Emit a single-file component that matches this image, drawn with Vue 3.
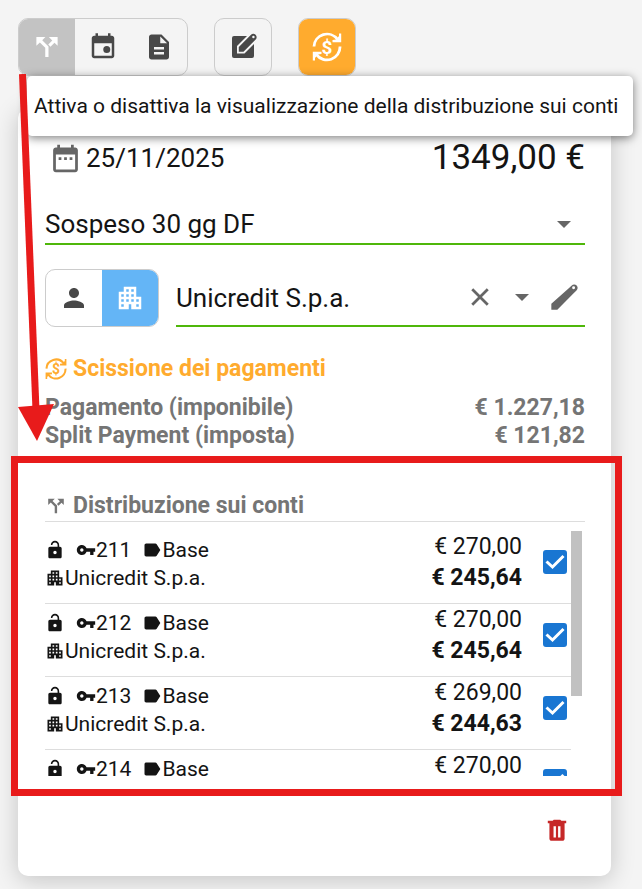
<script setup>
import { h, ref } from 'vue'

const paths = {
  split: 'M3.500 4H10.700L8.200 6.500L13.200 11.500V20H10.600V12.600L6.300 8.300L3.500 11zM20.500 4V11L18 8.500L14.800 11.700L13 9.900L16.200 6.700L13.500 4z',
  file: 'M14 2H6c-1.1 0-1.99.9-1.99 2L4 20c0 1.1.89 2 1.99 2H18c1.1 0 2-.9 2-2V8l-6-6zm2 16H8v-2h8v2zm0-4H8v-2h8v2zm-3-5V3.5L18.5 9H13z',
  building: 'M17 11V3H7v4H3v14h8v-4h2v4h8V11h-4zM7 19H5v-2h2v2zm0-4H5v-2h2v2zm0-4H5V9h2v2zm4 4H9v-2h2v2zm0-4H9V9h2v2zm0-4H9V5h2v2zm4 8h-2v-2h2v2zm0-4h-2V9h2v2zm0-4h-2V5h2v2zm4 12h-2v-2h2v2zm0-4h-2v-2h2v2z',
  person: 'M12 12c2.21 0 4-1.79 4-4s-1.79-4-4-4-4 1.79-4 4 1.79 4 4 4zm0 2c-2.67 0-8 1.34-8 4v2h16v-2c0-2.66-5.33-4-8-4z',
  dates: 'M9 11H7v2h2v-2zm4 0h-2v2h2v-2zm4 0h-2v2h2v-2zm2-7h-1V2h-2v2H8V2H6v2H5c-1.11 0-1.99.9-1.99 2L3 20c0 1.1.89 2 2 2h14c1.1 0 2-.9 2-2V6c0-1.1-.9-2-2-2zm0 16H5V9h14v11z',
  event: 'M19 3h-1V1h-2v2H8V1H6v2H5c-1.1 0-2 .9-2 2v14c0 1.1.9 2 2 2h14c1.1 0 2-.9 2-2V5c0-1.1-.9-2-2-2zm0 16H5V9h14v10zM15 11.2a2.8 2.8 0 1 0 0 5.6a2.8 2.8 0 1 0 0-5.6z',
  lock: 'M12 17c1.1 0 2-.9 2-2s-.9-2-2-2-2 .9-2 2 .9 2 2 2zm6-9h-1V6c0-2.76-2.24-5-5-5S7 3.24 7 6h1.9c0-1.71 1.39-3.1 3.1-3.1 1.71 0 3.1 1.39 3.1 3.1v2H6c-1.1 0-2 .9-2 2v10c0 1.1.9 2 2 2h12c1.1 0 2-.9 2-2V10c0-1.1-.9-2-2-2z',
  key: 'M12.65 10C11.83 7.67 9.61 6 7 6c-3.31 0-6 2.69-6 6s2.69 6 6 6c2.61 0 4.83-1.67 5.65-4H17v4h4v-4h2v-4H12.65zM7 14c-1.1 0-2-.9-2-2s.9-2 2-2 2 .9 2 2-.9 2-2 2z',
  label: 'M17.63 5.2C17.27 4.6 16.67 4.300 16 4.300L5 4.300C3.9 4.300 3 5.2 3 6.300v11.400c0 1.1.9 2 2 2L16 19.700c.67 0 1.27-.33 1.63-.84L22 12l-4.37-6.800z',
  caret: 'M6 9.5l6 6 6-6z',
  close: 'M19.500 6.200L17.800 4.500 12 10.300 6.200 4.500 4.500 6.200l5.800 5.800L4.500 17.800 6.200 19.500l5.800-5.800 5.800 5.800 1.700-1.700-5.800-5.800z',
  pencil: 'M2.500 17v4.500h4.500L19.600 8.900l1.600-1.600c1.4-1.4 1.3-2.8.3-3.9-1.1-1.1-2.6-1.1-3.9.1L16 5.100zM19.200 4a1.1 1.1 0 1 1 0 2.2a1.1 1.1 0 1 1 0-2.2z',
  trash: 'M9 2.5L8 3.5H3.5v2.2H5V20c0 1.1.9 2 2 2h10c1.1 0 2-.9 2-2V5.700h1.500V3.500H16l-1-1zM8.800 8.500h2.200v10.500H8.800zM13 8.500h2.200v10.500H13z',
}

const Icon = (props) =>
  h('svg', { viewBox: '0 0 24 24', 'aria-hidden': 'true', class: 'icon' }, [
    h('path', { d: paths[props.name], fill: 'currentColor', 'fill-rule': 'evenodd' }),
  ])
Icon.props = ['name']

const Exchange = () =>
  h('svg', { viewBox: '0 0 30 30', 'aria-hidden': 'true', class: 'icon' }, [
    h('path', {
      d: 'M2 14.500A13 13 0 0 1 25.500 7.400M28 14.500A13 13 0 0 1 4.500 22.600',
      fill: 'none', stroke: 'currentColor', 'stroke-width': 2.8,
    }),
    h('path', { d: 'M29.200 1.500V10.200H20.500V8L24 7.500L27 4V1.500zM.8 28.500V19.800H9.500V22L6 22.500L3 26V28.500z', fill: 'currentColor' }),
    h('text', {
      x: 15, y: 21.5, 'text-anchor': 'middle', fill: 'currentColor',
      'font-size': 19, 'font-weight': 700, 'font-family': 'Roboto, sans-serif',
    }, '$'),
  ])

const term = ref('Sospeso 30 gg DF')
const payer = ref('Unicredit S.p.a.')
const splits = [
  { label: 'Pagamento (imponibile)', value: '€ 1.227,18' },
  { label: 'Split Payment (imposta)', value: '€ 121,82' },
]
const accounts = ref([
  { code: '211', gross: '€ 270,00', net: '€ 245,64', on: true },
  { code: '212', gross: '€ 270,00', net: '€ 245,64', on: true },
  { code: '213', gross: '€ 269,00', net: '€ 244,63', on: true },
  { code: '214', gross: '€ 270,00', net: '', on: true },
])
</script>

<template>
  <main class="page">
    <nav class="toolbar">
      <div class="group">
        <button class="btn active" type="button" aria-describedby="tip"><Icon name="split" /></button>
        <button class="btn" type="button"><Icon name="event" /></button>
        <button class="btn" type="button"><Icon name="file" /></button>
      </div>
      <div class="group">
        <button class="btn" type="button">
          <svg class="icon" viewBox="0 0 30 30" aria-hidden="true">
            <path d="M6 4H24L26 6V24a2 2 0 0 1-2 2H6a2 2 0 0 1-2-2V6a2 2 0 0 1 2-2z" fill="currentColor" />
            <path class="cut" d="M9 21.500V14L22 1L30 2V8L16.500 21.500z" />
            <path d="M10.800 19.700v-4.700L23 2.800C24.300 1.500 26.200 1.500 27.600 2.700C29 4.200 29 6 27.700 7.400L15.500 19.700z" fill="currentColor" />
            <circle class="cut" cx="25.400" cy="5" r="1.200" />
          </svg>
        </button>
      </div>
      <div class="group">
        <button class="btn orange" type="button"><Exchange /></button>
      </div>
    </nav>
    <div id="tip" class="tooltip" role="tooltip">Attiva o disattiva la visualizzazione della distribuzione sui conti</div>

    <article class="card">
      <header class="summary">
        <span class="date"><Icon name="dates" />25/11/2025</span>
        <span class="total">1349,00 €</span>
      </header>

      <div class="field term">
        <select v-model="term" aria-label="Sospeso">
          <option>Sospeso 30 gg DF</option>
        </select>
        <Icon name="caret" class="caret" />
      </div>

      <div class="payer">
        <div class="group">
          <button class="btn" type="button"><Icon name="person" /></button>
          <button class="btn blue" type="button"><Icon name="building" /></button>
        </div>
        <div class="field">
          <input v-model="payer" type="text" aria-label="Unicredit S.p.a." />
          <button class="tool" type="button"><Icon name="close" /></button>
          <button class="tool" type="button"><Icon name="caret" /></button>
          <button class="tool" type="button"><Icon name="pencil" /></button>
        </div>
      </div>

      <section class="split">
        <h2 class="title warn"><Exchange />Scissione dei pagamenti</h2>
        <dl>
          <div v-for="s in splits" :key="s.label" class="line">
            <dt>{{ s.label }}</dt>
            <dd>{{ s.value }}</dd>
          </div>
        </dl>
      </section>

      <section class="accounts">
        <h2 class="title"><Icon name="split" />Distribuzione sui conti</h2>
        <div class="scroller">
          <ul class="list">
            <li v-for="a in accounts" :key="a.code" class="row">
              <label class="info" :for="'acc' + a.code">
                <span class="tags">
                  <Icon name="lock" />
                  <span class="tag"><Icon name="key" />{{ a.code }}</span>
                  <span class="tag"><Icon name="label" />Base</span>
                </span>
                <span v-if="a.net" class="tag"><Icon name="building" />Unicredit S.p.a.</span>
              </label>
              <span class="sums">
                <span>{{ a.gross }}</span>
                <b>{{ a.net }}</b>
              </span>
              <span class="check">
                <input :id="'acc' + a.code" v-model="a.on" type="checkbox" />
                <svg viewBox="0 0 24 24" aria-hidden="true"><path d="M3.500 11.500l6 5.500L20.500 6" /></svg>
              </span>
            </li>
          </ul>
          <div class="bar"></div>
        </div>
        <div class="highlight"></div>
      </section>

      <footer class="actions">
        <button class="delete" type="button"><Icon name="trash" /></button>
      </footer>
    </article>

    <svg class="arrow" viewBox="0 0 60 370" aria-hidden="true">
      <path d="M22.500 0L36 336" />
      <polygon points="18,333 54,330 37,367" />
    </svg>
  </main>
</template>

<style>
body {
  margin: 0;
  background: #f4f4f4;
}
</style>

<style scoped>
.page {
  position: relative;
  padding: 18px 31px 13px 18px;
  font-family: Roboto, "Liberation Sans", sans-serif;
  font-size: 21px;
  line-height: 28px;
  color: #141414;
}
.page *, .page { box-sizing: border-box; }
button { border: 0; padding: 0; margin: 0; background: none; color: inherit; font: inherit; }
.icon { display: block; flex: none; width: 30px; height: 30px; }
.toolbar { display: flex; gap: 26px; }
.group {
  display: flex;
  flex: none;
  height: 58px;
  border: 1px solid #ccc;
  border-radius: 10px;
  overflow: hidden;
  color: #484848;
}
.btn { width: 56px; height: 56px; display: grid; place-items: center; }
.active { background: #c3c3c3; color: #fff; }
.orange { background: #ffab2e; color: #fff; }
.blue { background: #64b5f6; color: #fff; }
.cut { fill: #f4f4f4; }
.tooltip {
  position: absolute;
  z-index: 2;
  top: 76px;
  left: 27px;
  right: 9px;
  padding: 16px 7px;
  background: #fff;
  border-radius: 5px;
  white-space: nowrap;
  box-shadow: 0 2px 10px rgba(0, 0, 0, .5);
}
.card {
  margin-top: 32px;
  padding: 30px 26px 28px 27px;
  background: #fff;
  border-radius: 10px;
  box-shadow: 0 4px 24px rgba(0, 0, 0, .2);
}
.summary { display: flex; justify-content: space-between; line-height: 40px; }
.date { display: flex; align-items: center; gap: 4px; padding-left: 4px; font-size: 26px; }
.date .icon { width: 33px; height: 33px; color: #666; }
.total { font-size: 35px; }
.field {
  display: flex;
  flex: 1;
  align-items: center;
  min-width: 0;
  border-bottom: 2px solid #4fb70a;
  color: #666;
}
.field select, .field input {
  flex: 1;
  min-width: 0;
  height: 39px;
  padding: 1px 0 0;
  border: 0;
  outline: 0;
  appearance: none;
  background: none;
  color: #141414;
  font: inherit;
  font-size: 26px;
}
.term { position: relative; margin-top: 26px; }
.caret { position: absolute; right: 7px; pointer-events: none; }
.field .icon { width: 28px; height: 28px; }
.payer { display: flex; gap: 17px; margin-top: 24px; }
.tool { width: 42px; display: grid; place-items: center; }
.tool:last-child .icon { width: 32px; height: 32px; }
.split { margin-top: 28px; padding-bottom: 12px; border-bottom: 1px solid #ddd; color: #757575; font-weight: 700; }
.title { display: flex; align-items: center; gap: 6px; margin: 0; font-size: 23px; line-height: 28px; font-weight: 700; color: #757575; }
.title .icon { width: 22px; height: 22px; }
.warn { color: #ffab2e; }
dl { margin: 11px 0 0; font-size: 23px; }
.line { display: flex; justify-content: space-between; }
dd { margin: 0; }
.accounts { position: relative; padding-top: 29px; }
.accounts .title { padding-bottom: 1px; border-bottom: 1px solid #ddd; }
.scroller { display: flex; height: 245px; margin: 9px 3px 0 0; }
.list {
  flex: 1;
  margin: 0;
  padding: 0;
  list-style: none;
  overflow: hidden;
}
.bar { width: 11px; height: 165px; background: #c1c1c1; }
.row { display: flex; align-items: flex-start; padding-right: 4px; height: 73px; border-bottom: 1px solid #ddd; }
.info { flex: 1; padding-top: 5px; }
.info .icon { width: 20px; height: 20px; }
.tags { display: flex; align-items: center; gap: 11px; }
.tag { display: flex; align-items: center; }
.sums { display: flex; flex-direction: column; align-items: flex-end; font-size: 23px; line-height: 31px; }
.check { position: relative; width: 24px; height: 24px; margin: 19px 0 0 21px; }
.check input { display: block; width: 24px; height: 24px; margin: 0; appearance: none; border: 2px solid #757575; border-radius: 3px; }
.check input:checked { border-color: #1976d2; background: #1976d2; }
.check svg { position: absolute; inset: 0; pointer-events: none; fill: none; stroke: #fff; stroke-width: 3; }
.highlight {
  position: absolute;
  inset: -7px -37px -20px -34px;
  border: 7px solid #e81b1b;
  pointer-events: none;
}
.actions { display: flex; justify-content: flex-end; margin-top: 36px; padding-right: 14px; }
.delete { width: 28px; height: 36px; display: grid; place-items: center; color: #c62828; }
.delete .icon { width: 26px; height: 26px; }
.arrow { position: absolute; z-index: 3; top: 74px; left: 0; width: 60px; height: 370px; pointer-events: none; fill: #e81b1b; }
.arrow path { stroke: #e81b1b; stroke-width: 7; }
</style>
